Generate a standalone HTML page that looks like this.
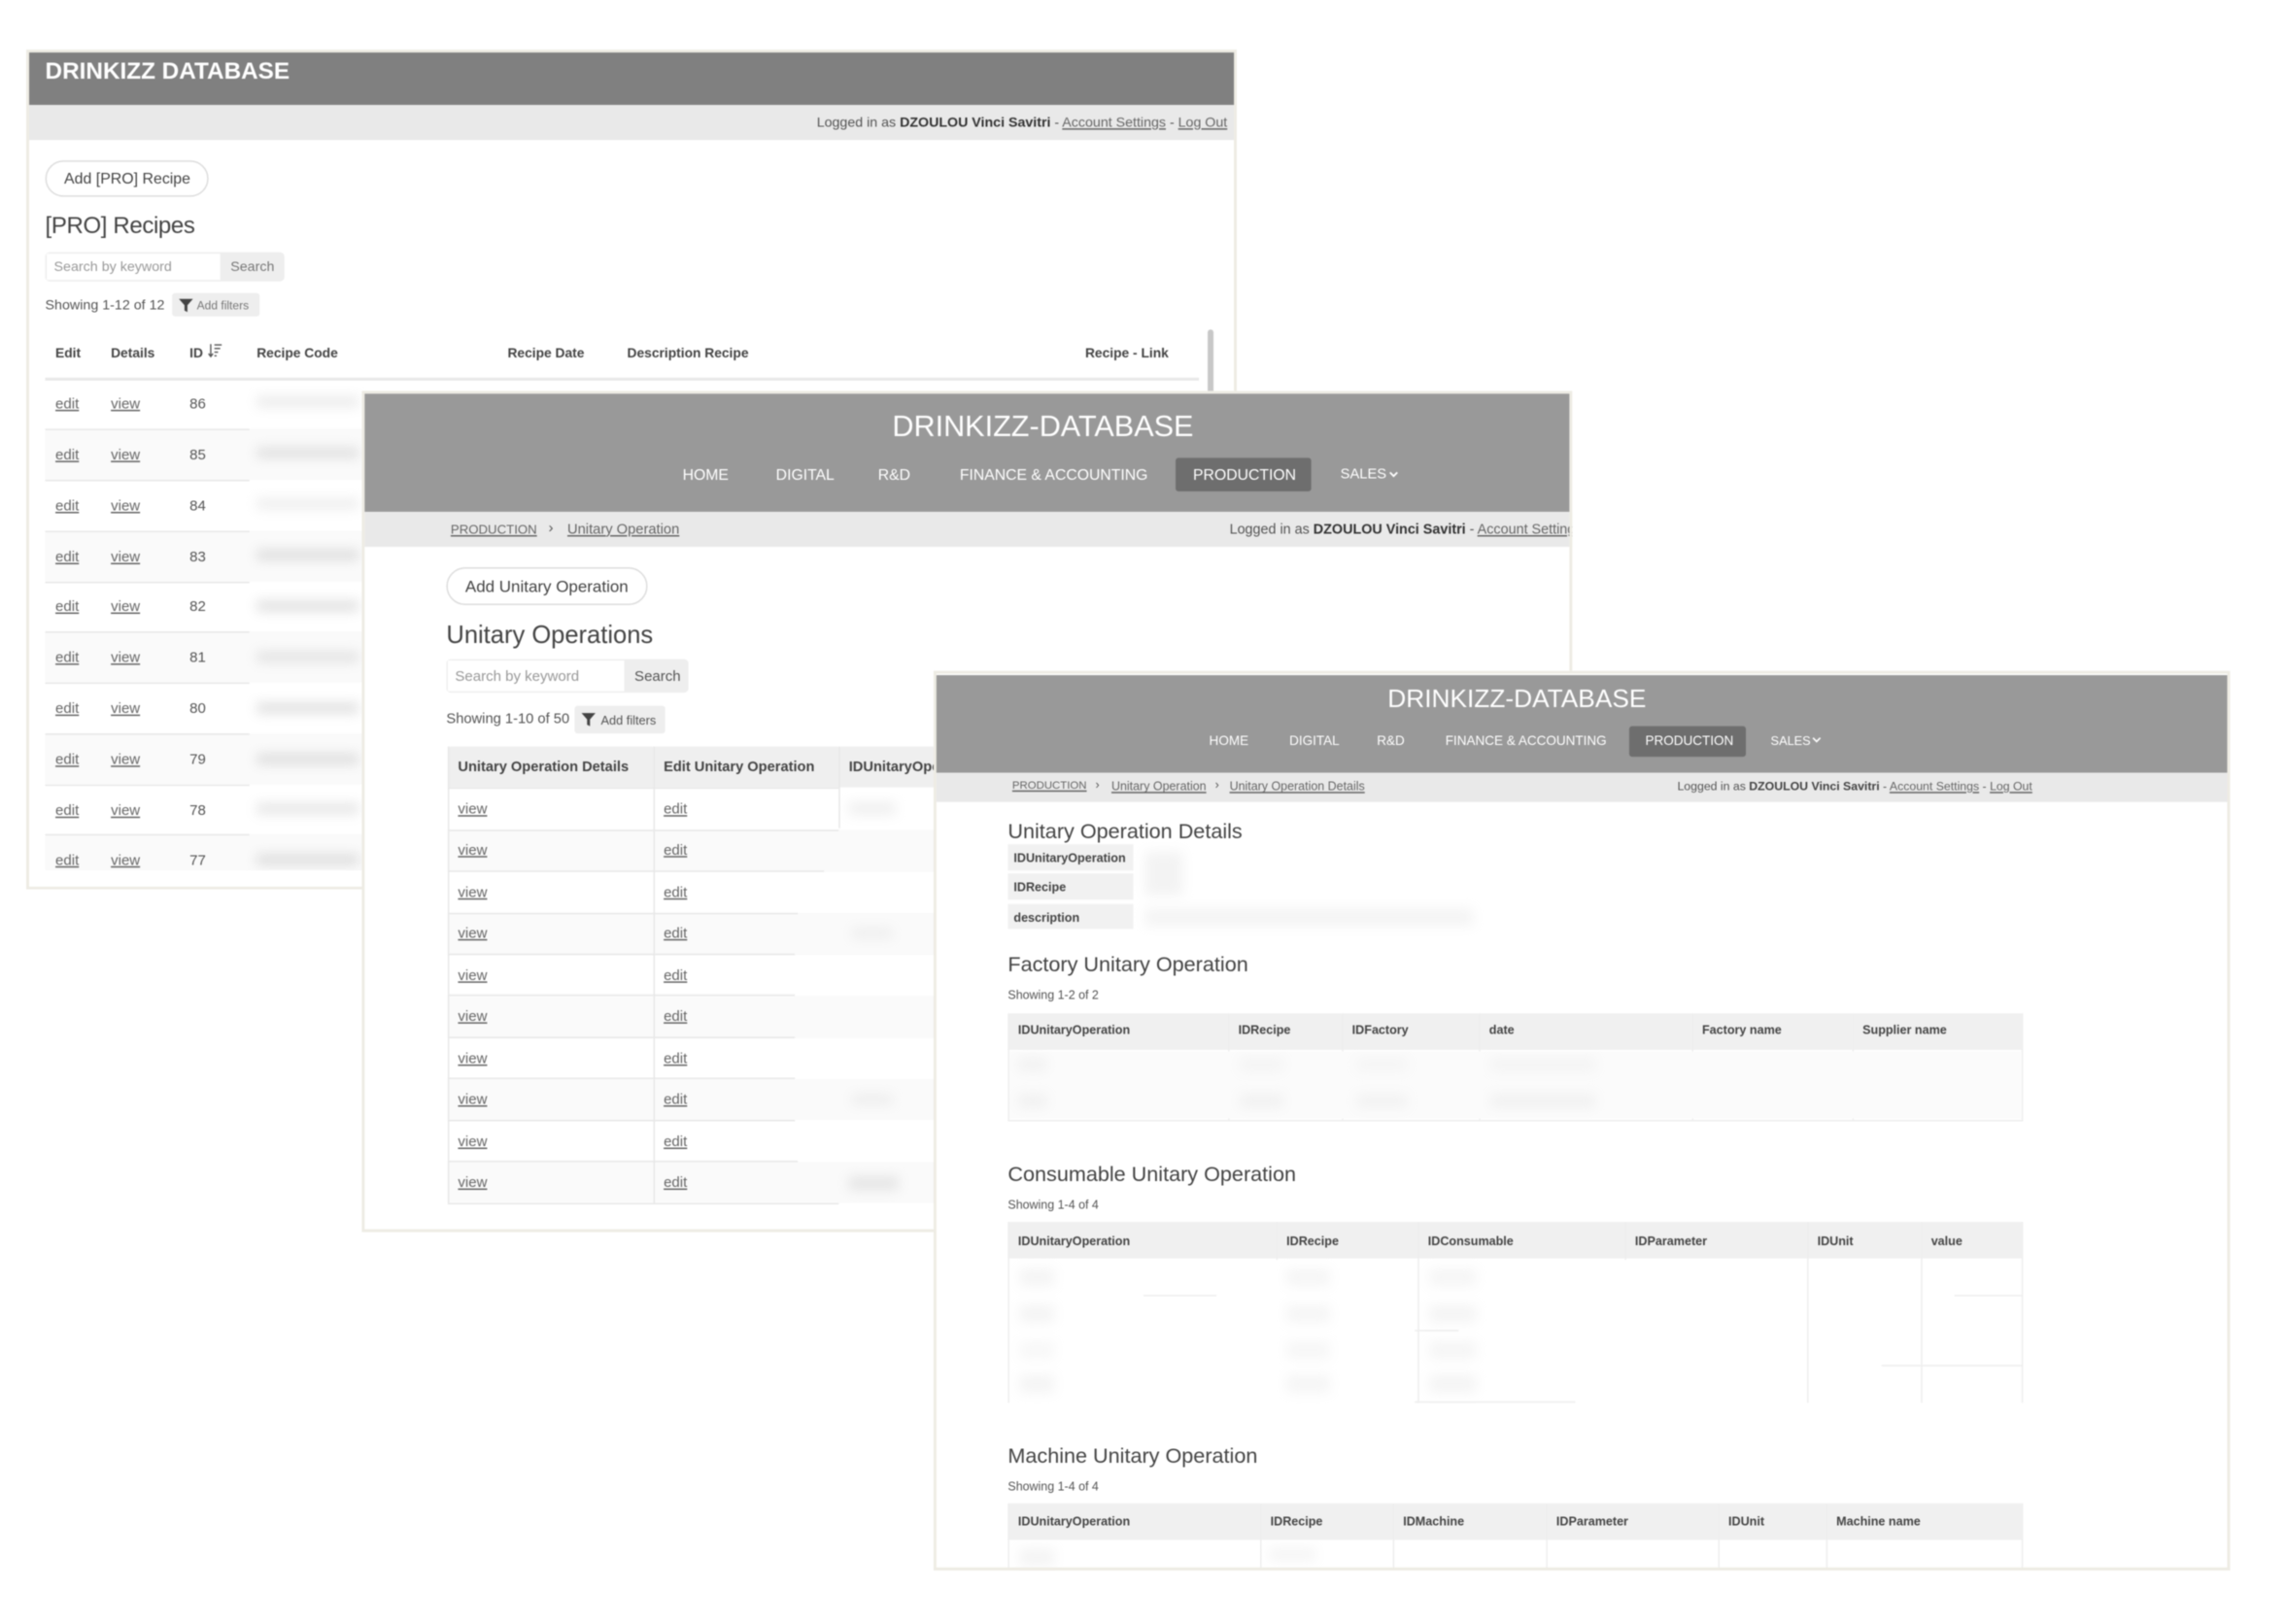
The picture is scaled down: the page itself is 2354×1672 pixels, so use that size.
<!DOCTYPE html>
<html><head><meta charset="utf-8"><title>Drinkizz Database</title>
<style>
html,body{margin:0;padding:0;background:#fff;width:2354px;height:1672px;overflow:hidden}
#s{position:absolute;left:0;top:0;width:1568px;height:1114px;transform:scale(1.50128);transform-origin:0 0;font-family:"Liberation Sans",sans-serif;color:#555;filter:blur(.42px)}
.w{position:absolute;left:0;top:0;width:1568px;height:1114px}
.b,.t,.o{position:absolute}
.t{white-space:nowrap;line-height:0;font-size:10px;margin-top:.8px}
.c{transform:translateX(-50%)}
.f{box-sizing:border-box;border:2px solid #eeece4;background:#fff}
.h{background:#999}
.g{background:#e9e9e9}
.o{background:#c4c4c4;filter:blur(4px);opacity:.55}
.l{background:#e8e8e8}
.x .l{background:#eee}
.z{background:#fafafa}
u{color:#666}
.n{color:#fff;font-size:10.5px;margin-top:0}
.n9{font-size:9px}
.ts{font-size:9.5px;color:#555}
.th{font-size:9.2px;font-weight:bold;color:#444}
.p{box-sizing:border-box;border:1px solid #ddd;border-radius:13px;background:#fff}
.e{color:#999;font-size:9.5px}
.m{font-size:8.3px;color:#555;margin-top:-.6px}
.m b{color:#444;font-size:8.4px}
.d{color:#555}
.ti{margin-top:0;color:#444}
</style></head><body><div id="s">

<!-- WINDOW 1 -->
<div class="w" style="clip-path:inset(34px 720px 504px 18px)">
<div class="b f" style="left:18px;top:34px;width:830px;height:576px"></div>
<div class="b" style="left:20px;top:36px;width:826px;height:36px;background:#808080"></div>
<div class="b g" style="left:20px;top:72px;width:826px;height:24px"></div>
<div class="t ti" style="left:31px;top:49px;font-size:16.2px;color:#fff;font-weight:bold">DRINKIZZ DATABASE</div>
<div class="t ts" style="left:560px;top:84px;font-size:9.47px">Logged in as <b style="color:#333">DZOULOU Vinci Savitri</b> - <u>Account Settings</u> - <u>Log Out</u></div>
<div class="b p" style="left:31px;top:110px;width:112px;height:25px"></div>
<div class="t" style="left:44px;top:122px;font-size:10.6px;color:#444">Add [PRO] Recipe</div>
<div class="t ti" style="left:31px;top:155.5px;font-size:16px;letter-spacing:-.25px">[PRO] Recipes</div>
<div class="b" style="left:31px;top:173px;width:164px;height:20px;background:#eee;border-radius:3px"></div>
<div class="b" style="left:32px;top:174px;width:119px;height:18px;background:#fff"></div>
<div class="t e" style="left:37px;top:183px">Search by keyword</div>
<div class="t e" style="left:158px;top:183px;color:#777">Search</div>
<div class="t ts" style="left:31px;top:209px">Showing 1-12 of 12</div>
<div class="b" style="left:118px;top:201px;width:60px;height:16px;background:#eee;border-radius:2px"></div>
<svg class="b" style="left:122px;top:204px" width="11" height="11" viewBox="0 0 11 11"><path d="M.7 1h9.6L6.5 5.3V10L4.5 9V5.3z" fill="#444"/></svg>
<div class="t" style="left:135px;top:209px;font-size:8px;color:#777">Add filters</div>
<div class="t th" style="left:38px;top:241px">Edit</div>
<div class="t th" style="left:76px;top:241px">Details</div>
<div class="t th" style="left:130px;top:241px">ID</div>
<svg class="b" style="left:142px;top:234.500px" width="11" height="12" viewBox="0 0 11 12"><path d="M2.5 1v8M1 7.5l1.5 2 1.5-2M5 1.5h5M5 4h4M5 6.5h2.5M5 9h1.5" stroke="#555" stroke-width=".9" fill="none"/></svg>
<div class="t th" style="left:176px;top:241px">Recipe Code</div>
<div class="t th" style="left:348px;top:241px">Recipe Date</div>
<div class="t th" style="left:430px;top:241px">Description Recipe</div>
<div class="t th" style="left:744px;top:241px">Recipe - Link</div>
<div class="b" style="left:828px;top:226px;width:4px;height:45px;background:#c8c8c8;border-radius:2px"></div>
<div class="b l" style="left:31px;top:259px;width:791px;height:2px"></div>
<div class="b z" style="left:31px;top:294px;width:791px;height:35px"></div>
<div class="b z" style="left:31px;top:364px;width:791px;height:35px"></div>
<div class="b z" style="left:31px;top:433px;width:791px;height:35px"></div>
<div class="b z" style="left:31px;top:503px;width:791px;height:35px"></div>
<div class="b z" style="left:31px;top:572px;width:791px;height:25px"></div>
<div class="b l" style="left:31px;top:294px;width:140px;height:1px"></div>
<div class="b l" style="left:31px;top:329px;width:140px;height:1px"></div>
<div class="b l" style="left:31px;top:364px;width:140px;height:1px"></div>
<div class="b l" style="left:31px;top:399px;width:140px;height:1px"></div>
<div class="b l" style="left:31px;top:433px;width:140px;height:1px"></div>
<div class="b l" style="left:31px;top:468px;width:140px;height:1px"></div>
<div class="b l" style="left:31px;top:503px;width:140px;height:1px"></div>
<div class="b l" style="left:31px;top:538px;width:140px;height:1px"></div>
<div class="b l" style="left:31px;top:572px;width:140px;height:1px"></div>
<div class="t" style="left:38px;top:277px"><u>edit</u></div><div class="t" style="left:76px;top:277px"><u>view</u></div><div class="t d" style="left:130px;top:277px">86</div>
<div class="t" style="left:38px;top:312px"><u>edit</u></div><div class="t" style="left:76px;top:312px"><u>view</u></div><div class="t d" style="left:130px;top:312px">85</div>
<div class="t" style="left:38px;top:347px"><u>edit</u></div><div class="t" style="left:76px;top:347px"><u>view</u></div><div class="t d" style="left:130px;top:347px">84</div>
<div class="t" style="left:38px;top:382px"><u>edit</u></div><div class="t" style="left:76px;top:382px"><u>view</u></div><div class="t d" style="left:130px;top:382px">83</div>
<div class="t" style="left:38px;top:416.5px"><u>edit</u></div><div class="t" style="left:76px;top:416.5px"><u>view</u></div><div class="t d" style="left:130px;top:416.5px">82</div>
<div class="t" style="left:38px;top:451.5px"><u>edit</u></div><div class="t" style="left:76px;top:451.5px"><u>view</u></div><div class="t d" style="left:130px;top:451.5px">81</div>
<div class="t" style="left:38px;top:486.5px"><u>edit</u></div><div class="t" style="left:76px;top:486.5px"><u>view</u></div><div class="t d" style="left:130px;top:486.5px">80</div>
<div class="t" style="left:38px;top:521.5px"><u>edit</u></div><div class="t" style="left:76px;top:521.5px"><u>view</u></div><div class="t d" style="left:130px;top:521.5px">79</div>
<div class="t" style="left:38px;top:556px"><u>edit</u></div><div class="t" style="left:76px;top:556px"><u>view</u></div><div class="t d" style="left:130px;top:556px">78</div>
<div class="t" style="left:38px;top:590.5px"><u>edit</u></div><div class="t" style="left:76px;top:590.5px"><u>view</u></div><div class="t d" style="left:130px;top:590.5px">77</div>
<div class="o" style="left:176px;top:272px;width:70px;height:7px;opacity:.35"></div>
<div class="o" style="left:176px;top:307px;width:70px;height:7px;opacity:.5"></div>
<div class="o" style="left:176px;top:342px;width:70px;height:7px;opacity:.3"></div>
<div class="o" style="left:176px;top:377px;width:70px;height:7px;opacity:.55"></div>
<div class="o" style="left:176px;top:412px;width:70px;height:7px;opacity:.55"></div>
<div class="o" style="left:176px;top:447px;width:70px;height:7px;opacity:.45"></div>
<div class="o" style="left:176px;top:482px;width:70px;height:7px;opacity:.55"></div>
<div class="o" style="left:176px;top:517px;width:70px;height:7px;opacity:.55"></div>
<div class="o" style="left:176px;top:551px;width:70px;height:7px;opacity:.45"></div>
<div class="o" style="left:176px;top:586px;width:70px;height:7px;opacity:.55"></div>
<div class="b" style="left:20px;top:597px;width:826px;height:11px;background:#fff"></div>
</div>

<!-- WINDOW 2 -->
<div class="w" style="clip-path:inset(268px 490px 269px 248px)">
<div class="b f" style="left:248px;top:268px;width:830px;height:577px"></div>
<div class="b h" style="left:250px;top:270px;width:826px;height:81px"></div>
<div class="b g" style="left:250px;top:351px;width:826px;height:24px"></div>
<div class="t c ti" style="left:715px;top:293px;font-size:20.4px;color:#fff">DRINKIZZ-DATABASE</div>
<div class="t n" style="left:468px;top:325.5px">HOME</div>
<div class="t n" style="left:532px;top:325.5px">DIGITAL</div>
<div class="t n" style="left:602px;top:325.5px">R&amp;D</div>
<div class="t n" style="left:658px;top:325.5px">FINANCE &amp; ACCOUNTING</div>
<div class="b" style="left:806px;top:314px;width:93px;height:23px;background:#6e6e6e;border-radius:2px"></div>
<div class="t n" style="left:818px;top:325.5px">PRODUCTION</div>
<div class="t n" style="left:919px;top:325.5px;font-size:9.8px">SALES</div>
<svg class="b" style="left:952px;top:323px" width="7" height="5" viewBox="0 0 7 5"><path d="M1 1l2.5 2.5L6 1" stroke="#fff" stroke-width="1.2" fill="none"/></svg>
<div class="t ts" style="left:309px;top:362px;font-size:8.8px"><u>PRODUCTION</u></div>
<div class="t ts" style="left:376px;top:362px;font-size:10px">›</div>
<div class="t ts" style="left:389px;top:363px;font-size:9.8px"><u>Unitary Operation</u></div>
<div class="t ts" style="left:843px;top:363px;font-size:9.57px">Logged in as <b style="color:#333">DZOULOU Vinci Savitri</b> - <u>Account Settings</u> - <u>Log Out</u></div>
<div class="b" style="left:1076px;top:351px;width:2px;height:24px;background:#eeece4"></div>
<div class="b" style="left:1078px;top:351px;width:300px;height:24px;background:#fff"></div>
<div class="b p" style="left:306px;top:389px;width:138px;height:26px"></div>
<div class="t ti" style="left:319px;top:403px;font-size:11.3px">Add Unitary Operation</div>
<div class="t ti" style="left:306px;top:436px;font-size:17px">Unitary Operations</div>
<div class="b" style="left:306px;top:452px;width:166px;height:23px;background:#eee;border-radius:3px"></div>
<div class="b" style="left:307px;top:453px;width:121px;height:21px;background:#fff"></div>
<div class="t e" style="left:312px;top:464px;font-size:10px">Search by keyword</div>
<div class="t e" style="left:435px;top:464px;color:#555;font-size:10px">Search</div>
<div class="t ts" style="left:306px;top:493px;font-size:9.8px">Showing 1-10 of 50</div>
<div class="b" style="left:394px;top:484px;width:62px;height:19px;background:#eee;border-radius:2px"></div>
<svg class="b" style="left:398px;top:488px" width="11" height="11" viewBox="0 0 11 11"><path d="M.7 1h9.6L6.5 5.3V10L4.5 9V5.3z" fill="#444"/></svg>
<div class="t" style="left:412px;top:493px;font-size:8.5px;color:#555">Add filters</div>
<div class="b" style="left:307px;top:512px;width:340px;height:28px;background:#efefef"></div>
<div class="t th" style="left:314px;top:526px;font-size:9.75px">Unitary Operation Details</div>
<div class="t th" style="left:455px;top:526px;font-size:9.75px">Edit Unitary Operation</div>
<div class="t th" style="left:582px;top:526px;font-size:9.75px">IDUnitaryOperation</div>
<div class="b z" style="left:307px;top:569px;width:340px;height:28.5px"></div>
<div class="b z" style="left:307px;top:626px;width:340px;height:28.5px"></div>
<div class="b z" style="left:307px;top:683px;width:340px;height:28.5px"></div>
<div class="b z" style="left:307px;top:739.5px;width:340px;height:28.5px"></div>
<div class="b z" style="left:307px;top:796.5px;width:340px;height:28.5px"></div>
<div class="b l" style="left:307px;top:512px;width:1px;height:313px"></div>
<div class="b l" style="left:448px;top:512px;width:1px;height:313px"></div>
<div class="b l" style="left:575px;top:512px;width:1px;height:56px"></div>
<div class="b l" style="left:307px;top:540px;width:268px;height:1px"></div>
<div class="b l" style="left:307px;top:568.5px;width:268px;height:1px"></div>
<div class="b l" style="left:307px;top:597px;width:258px;height:1px"></div>
<div class="b l" style="left:307px;top:625.5px;width:240px;height:1px"></div>
<div class="b l" style="left:307px;top:654px;width:238px;height:1px"></div>
<div class="b l" style="left:307px;top:682px;width:238px;height:1px"></div>
<div class="b l" style="left:307px;top:710.5px;width:238px;height:1px"></div>
<div class="b l" style="left:307px;top:739px;width:238px;height:1px"></div>
<div class="b l" style="left:307px;top:767.5px;width:238px;height:1px"></div>
<div class="b l" style="left:307px;top:796px;width:240px;height:1px"></div>
<div class="b l" style="left:307px;top:824.5px;width:268px;height:1px"></div>
<div class="t" style="left:314px;top:555px"><u>view</u></div><div class="t" style="left:455px;top:555px"><u>edit</u></div>
<div class="t" style="left:314px;top:583.5px"><u>view</u></div><div class="t" style="left:455px;top:583.5px"><u>edit</u></div>
<div class="t" style="left:314px;top:612px"><u>view</u></div><div class="t" style="left:455px;top:612px"><u>edit</u></div>
<div class="t" style="left:314px;top:640.5px"><u>view</u></div><div class="t" style="left:455px;top:640.5px"><u>edit</u></div>
<div class="t" style="left:314px;top:669px"><u>view</u></div><div class="t" style="left:455px;top:669px"><u>edit</u></div>
<div class="t" style="left:314px;top:697.5px"><u>view</u></div><div class="t" style="left:455px;top:697.5px"><u>edit</u></div>
<div class="t" style="left:314px;top:726px"><u>view</u></div><div class="t" style="left:455px;top:726px"><u>edit</u></div>
<div class="t" style="left:314px;top:754.5px"><u>view</u></div><div class="t" style="left:455px;top:754.5px"><u>edit</u></div>
<div class="t" style="left:314px;top:783px"><u>view</u></div><div class="t" style="left:455px;top:783px"><u>edit</u></div>
<div class="t" style="left:314px;top:811.5px"><u>view</u></div><div class="t" style="left:455px;top:811.5px"><u>edit</u></div>
<div class="o" style="left:582px;top:550px;width:32px;height:9px;opacity:.25"></div>
<div class="o" style="left:584px;top:636px;width:28px;height:8px;opacity:.2"></div>
<div class="o" style="left:584px;top:750px;width:28px;height:8px;opacity:.2"></div>
<div class="o" style="left:582px;top:807px;width:34px;height:9px;opacity:.4"></div>
</div>

<!-- WINDOW 3 -->
<div class="w x" style="clip-path:inset(460px 39px 37px 640px)">
<div class="b f" style="left:640px;top:460px;width:889px;height:617px"></div>
<div class="b h" style="left:642px;top:463px;width:885px;height:67px"></div>
<div class="b g" style="left:642px;top:530px;width:885px;height:20px"></div>
<div class="t c ti" style="left:1040px;top:478.5px;font-size:17.5px;color:#fff">DRINKIZZ-DATABASE</div>
<div class="t n n9" style="left:829px;top:507.5px">HOME</div>
<div class="t n n9" style="left:884px;top:507.5px">DIGITAL</div>
<div class="t n n9" style="left:944px;top:507.5px">R&amp;D</div>
<div class="t n n9" style="left:991px;top:507.5px">FINANCE &amp; ACCOUNTING</div>
<div class="b" style="left:1117px;top:498px;width:80px;height:21px;background:#6e6e6e;border-radius:2px"></div>
<div class="t n n9" style="left:1128px;top:507.5px">PRODUCTION</div>
<div class="t n n9" style="left:1214px;top:507.5px;font-size:8.5px">SALES</div>
<svg class="b" style="left:1242px;top:505px" width="7" height="5" viewBox="0 0 7 5"><path d="M1 1l2.5 2.5L6 1" stroke="#fff" stroke-width="1.1" fill="none"/></svg>
<div class="t m" style="left:694px;top:539.5px;font-size:7.6px"><u>PRODUCTION</u></div>
<div class="t m" style="left:751px;top:539px">›</div>
<div class="t m" style="left:762px;top:540px"><u>Unitary Operation</u></div>
<div class="t m" style="left:833px;top:539px">›</div>
<div class="t m" style="left:843px;top:540px"><u>Unitary Operation Details</u></div>
<div class="t m" style="left:1150px;top:540.5px;font-size:8.2px">Logged in as <b style="font-size:8.2px">DZOULOU Vinci Savitri</b> - <u>Account Settings</u> - <u>Log Out</u></div>

<div class="t ti" style="left:691px;top:570.5px;font-size:14.4px">Unitary Operation Details</div>
<div class="b" style="left:691px;top:579px;width:86px;height:18px;background:#f1f1f1"></div>
<div class="b" style="left:691px;top:599px;width:86px;height:18px;background:#f1f1f1"></div>
<div class="b" style="left:691px;top:620px;width:86px;height:17px;background:#f1f1f1"></div>
<div class="t m" style="left:695px;top:588.5px"><b>IDUnitaryOperation</b></div>
<div class="t m" style="left:695px;top:608.5px"><b>IDRecipe</b></div>
<div class="t m" style="left:695px;top:629.5px"><b>description</b></div>
<div class="o" style="left:785px;top:584px;width:26px;height:30px;opacity:.2"></div>
<div class="o" style="left:785px;top:623px;width:225px;height:12px;opacity:.18"></div>

<div class="t ti" style="left:691px;top:661.5px;font-size:14.4px">Factory Unitary Operation</div>
<div class="t m" style="left:691px;top:682.5px">Showing 1-2 of 2</div>
<div class="b" style="left:691px;top:695px;width:696px;height:25px;background:#f0f0f0"></div>
<div class="b l" style="left:691px;top:695px;width:1px;height:74px"></div>
<div class="b l" style="left:842px;top:695px;width:1px;height:74px"></div>
<div class="b l" style="left:920px;top:695px;width:1px;height:74px"></div>
<div class="b l" style="left:1014px;top:695px;width:1px;height:74px"></div>
<div class="b l" style="left:1160px;top:695px;width:1px;height:74px"></div>
<div class="b l" style="left:1270px;top:695px;width:1px;height:74px"></div>
<div class="b l" style="left:1386px;top:695px;width:1px;height:74px"></div>
<div class="b l" style="left:691px;top:768px;width:696px;height:1px"></div>
<div class="t m" style="left:698px;top:707px"><b>IDUnitaryOperation</b></div>
<div class="t m" style="left:849px;top:707px"><b>IDRecipe</b></div>
<div class="t m" style="left:927px;top:707px"><b>IDFactory</b></div>
<div class="t m" style="left:1021px;top:707px"><b>date</b></div>
<div class="t m" style="left:1167px;top:707px"><b>Factory name</b></div>
<div class="t m" style="left:1277px;top:707px"><b>Supplier name</b></div>
<div class="b" style="left:692px;top:721px;width:694px;height:46px;background:#fbfbfb"></div>
<div class="o" style="left:698px;top:725px;width:20px;height:10px;opacity:.16"></div>
<div class="o" style="left:698px;top:750px;width:20px;height:10px;opacity:.16"></div>
<div class="o" style="left:850px;top:725px;width:30px;height:10px;opacity:.12"></div>
<div class="o" style="left:850px;top:750px;width:30px;height:10px;opacity:.16"></div>
<div class="o" style="left:930px;top:725px;width:35px;height:10px;opacity:.1"></div>
<div class="o" style="left:930px;top:750px;width:35px;height:10px;opacity:.14"></div>
<div class="o" style="left:1022px;top:725px;width:72px;height:10px;opacity:.12"></div>
<div class="o" style="left:1022px;top:750px;width:72px;height:10px;opacity:.16"></div>

<div class="t ti" style="left:691px;top:805.5px;font-size:14.4px">Consumable Unitary Operation</div>
<div class="t m" style="left:691px;top:827px">Showing 1-4 of 4</div>
<div class="b" style="left:691px;top:838px;width:696px;height:25px;background:#f0f0f0"></div>
<div class="b l" style="left:691px;top:838px;width:1px;height:124px"></div>
<div class="b l" style="left:875px;top:838px;width:1px;height:26px"></div>
<div class="b l" style="left:972px;top:838px;width:1px;height:124px"></div>
<div class="b l" style="left:1114px;top:838px;width:1px;height:26px"></div>
<div class="b l" style="left:1239px;top:838px;width:1px;height:124px"></div>
<div class="b l" style="left:1317px;top:838px;width:1px;height:124px"></div>
<div class="b l" style="left:1386px;top:838px;width:1px;height:124px"></div>
<div class="t m" style="left:698px;top:851.5px"><b>IDUnitaryOperation</b></div>
<div class="t m" style="left:882px;top:851.5px"><b>IDRecipe</b></div>
<div class="t m" style="left:979px;top:851.5px"><b>IDConsumable</b></div>
<div class="t m" style="left:1121px;top:851.5px"><b>IDParameter</b></div>
<div class="t m" style="left:1246px;top:851.5px"><b>IDUnit</b></div>
<div class="t m" style="left:1324px;top:851.5px"><b>value</b></div>
<div class="b l" style="left:1290px;top:936px;width:97px;height:1px"></div>
<div class="b l" style="left:784px;top:888px;width:50px;height:1px"></div>
<div class="b l" style="left:1340px;top:888px;width:47px;height:1px"></div>
<div class="b l" style="left:970px;top:912px;width:30px;height:1px"></div>
<div class="b l" style="left:970px;top:961px;width:110px;height:1px"></div>
<div class="o" style="left:699px;top:870px;width:24px;height:12px;opacity:.18"></div>
<div class="o" style="left:699px;top:895px;width:24px;height:12px;opacity:.18"></div>
<div class="o" style="left:699px;top:920px;width:24px;height:12px;opacity:.12"></div>
<div class="o" style="left:699px;top:943px;width:24px;height:12px;opacity:.18"></div>
<div class="o" style="left:882px;top:870px;width:30px;height:12px;opacity:.16"></div>
<div class="o" style="left:882px;top:895px;width:30px;height:12px;opacity:.16"></div>
<div class="o" style="left:882px;top:920px;width:30px;height:12px;opacity:.14"></div>
<div class="o" style="left:882px;top:943px;width:30px;height:12px;opacity:.16"></div>
<div class="o" style="left:980px;top:870px;width:32px;height:12px;opacity:.16"></div>
<div class="o" style="left:980px;top:895px;width:32px;height:12px;opacity:.18"></div>
<div class="o" style="left:980px;top:920px;width:32px;height:12px;opacity:.16"></div>
<div class="o" style="left:980px;top:943px;width:32px;height:12px;opacity:.18"></div>

<div class="t ti" style="left:691px;top:998.5px;font-size:14.4px">Machine Unitary Operation</div>
<div class="t m" style="left:691px;top:1020px">Showing 1-4 of 4</div>
<div class="b" style="left:691px;top:1031px;width:696px;height:25px;background:#f0f0f0"></div>
<div class="b l" style="left:691px;top:1031px;width:1px;height:44px"></div>
<div class="b l" style="left:864px;top:1031px;width:1px;height:44px"></div>
<div class="b l" style="left:955px;top:1031px;width:1px;height:44px"></div>
<div class="b l" style="left:1060px;top:1031px;width:1px;height:44px"></div>
<div class="b l" style="left:1178px;top:1031px;width:1px;height:44px"></div>
<div class="b l" style="left:1252px;top:1031px;width:1px;height:44px"></div>
<div class="b l" style="left:1386px;top:1031px;width:1px;height:44px"></div>
<div class="t m" style="left:698px;top:1044px"><b>IDUnitaryOperation</b></div>
<div class="t m" style="left:871px;top:1044px"><b>IDRecipe</b></div>
<div class="t m" style="left:962px;top:1044px"><b>IDMachine</b></div>
<div class="t m" style="left:1067px;top:1044px"><b>IDParameter</b></div>
<div class="t m" style="left:1185px;top:1044px"><b>IDUnit</b></div>
<div class="t m" style="left:1259px;top:1044px"><b>Machine name</b></div>
<div class="o" style="left:699px;top:1062px;width:24px;height:12px;opacity:.18"></div>
<div class="o" style="left:870px;top:1062px;width:32px;height:8px;opacity:.18"></div>
<div class="b" style="left:640px;top:1075px;width:889px;height:2px;background:#eeece4"></div>
</div>

</div></body></html>
